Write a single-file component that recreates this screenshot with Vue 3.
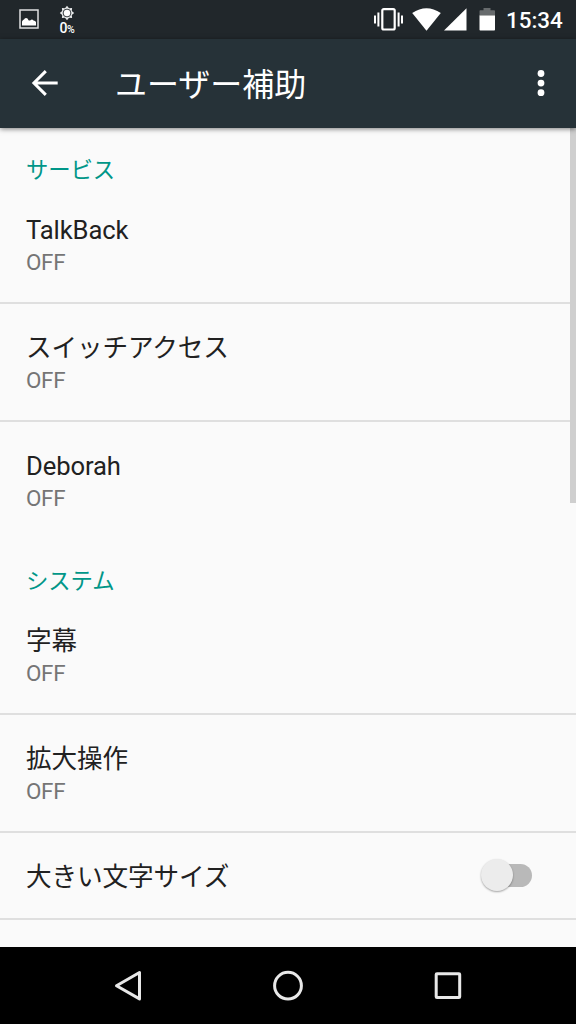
<script setup>
import { ref } from 'vue'

const sections = ref([
  {
    title: 'サービス',
    items: [
      { label: 'TalkBack', summary: 'OFF', latin: true },
      { label: 'スイッチアクセス', summary: 'OFF' },
      { label: 'Deborah', summary: 'OFF', latin: true },
    ],
  },
  {
    title: 'システム',
    items: [
      { label: '字幕', summary: 'OFF' },
      { label: '拡大操作', summary: 'OFF' },
      { label: '大きい文字サイズ', toggle: true },
    ],
  },
])
</script>

<template>
  <div class="screen">
    <header class="status">
      <svg class="picture" width="20" height="20" viewBox="0 0 20 20">
        <rect x="1" y="1" width="18" height="18" fill="none" stroke="#dfe1e2" stroke-width="1.5" />
        <path d="M3 16.500V12.500q1-1.800 2-2q.5-1.500 2-1.500q1.800 0 2.500 2.200q1 .8 2 0q1.500-1.500 3 .2q1.800 0 2.500 1.500v3.600z" fill="#fff" />
      </svg>
      <div class="brightness">
        <svg width="16" height="16" viewBox="0 0 16 16">
          <path d="M8 .8 10 3.200 13.100 2.900 12.800 6 15.200 8 12.800 10 13.100 13.100 10 12.800 8 15.200 6 12.800 2.900 13.100 3.200 10 .8 8 3.200 6 2.900 2.900 6 3.200z" fill="#e8eaeb" />
          <circle cx="8" cy="8" r="3.900" fill="#fff" stroke="#343a3e" stroke-width="1" />
        </svg>
        <span class="percent">0<small>%</small></span>
      </div>
      <svg class="indicators" width="124" height="26" viewBox="0 0 124 26">
        <g fill="#fff">
          <path d="M0 8.500h2v8H0zM3.400 5.500h2v14h-2zM23.600 5.500h2v14h-2zM27 8.500h2v8h-2z" />
          <rect x="8.300" y="2.100" width="12.400" height="20.400" rx="1.500" fill="none" stroke="#fff" stroke-width="2.200" />
          <path d="M38.200 6Q52.500-3.500 66.800 6L52.500 23.700z" />
          <path d="M92.500 1.200V23.500H70z" />
          <path d="M105.500 8.200h15.500V22.700q0 .8-.8 .8h-13.900q-.8 0-.8-.8z" />
        </g>
        <path d="M105.500 8.200V4q0-.8 .8-.8h3.200V1h7v2.200h3.700q.8 0 .8 .8v4.200z" fill="#676b6d" />
      </svg>
      <time>15:34</time>
    </header>

    <div class="toolbar">
      <svg class="back" width="28" height="28" viewBox="0 0 28 28">
        <path d="M26.700 14H3M14.800 2.100 2.900 14 14.800 25.900" fill="none" stroke="#fff" stroke-width="3" />
      </svg>
      <h1>ユーザー補助</h1>
      <svg class="more" width="8" height="28" viewBox="0 0 8 28" fill="#fff">
        <circle cx="4" cy="4.500" r="3.400" />
        <circle cx="4" cy="14.100" r="3.400" />
        <circle cx="4" cy="23.700" r="3.400" />
      </svg>
    </div>

    <main>
      <section v-for="section in sections" :key="section.title">
        <h2>{{ section.title }}</h2>
        <div v-for="item in section.items" :key="item.label" class="item" :class="{ single: item.toggle }">
          <div class="text">
            <div class="label" :class="{ latin: item.latin }">{{ item.label }}</div>
            <div v-if="item.summary" class="summary">{{ item.summary }}</div>
          </div>
          <div v-if="item.toggle" class="switch"><span class="thumb"></span></div>
        </div>
      </section>
      <div class="scrollbar"></div>
    </main>

    <nav>
      <svg width="160" height="77" viewBox="0 0 160 77">
        <path d="M91.500 25.500v26.400L68.500 38.700z" fill="none" stroke="#e8e8e8" stroke-width="3" stroke-linejoin="round" />
      </svg>
      <svg width="160" height="77" viewBox="0 0 160 77">
        <circle cx="80" cy="38.700" r="13.400" fill="none" stroke="#e8e8e8" stroke-width="3" />
      </svg>
      <svg width="160" height="77" viewBox="0 0 160 77">
        <rect x="68.200" y="26.800" width="23.500" height="23.700" rx=".8" fill="none" stroke="#e8e8e8" stroke-width="3" />
      </svg>
    </nav>
  </div>
</template>

<style>
body {
  background: #fafafa;
}
</style>

<style scoped>
.screen {
  width: 576px;
  height: 1024px;
  display: flex;
  flex-direction: column;
  overflow: hidden;
  background: #fafafa;
  color: #212121;
  font-family: Roboto, "Noto Sans CJK JP", sans-serif;
}
.status {
  height: 39px;
  flex: none;
  display: flex;
  align-items: flex-start;
  background: #21272b;
  color: #fff;
}
.picture {
  margin: 9px 0 0 19px;
}
.brightness {
  width: 24px;
  margin: 5px 0 0 16px;
  display: flex;
  flex-direction: column;
  align-items: center;
}
.percent {
  font-size: 14px;
  font-weight: 500;
  line-height: 14px;
  letter-spacing: -0.3px;
  white-space: nowrap;
}
.percent small {
  font-size: 10.5px;
}
.indicators {
  margin: 7px 0 0 295px;
}
time {
  margin-left: 8px;
  font-size: 22.4px;
  font-weight: 500;
  line-height: 40px;
}
.toolbar {
  position: relative;
  z-index: 1;
  height: 89px;
  flex: none;
  display: flex;
  align-items: center;
  background: #263238;
  box-shadow: 0 1px 5px rgba(0, 0, 0, 0.5);
}
.back {
  margin: 0 0 1px 31px;
}
h1 {
  flex: 1;
  margin: 2px 0 0 56px;
  color: #fff;
  font-size: 32px;
  font-weight: 400;
  line-height: 40px;
}
.more {
  margin: 0 31px 1px 0;
}
main {
  position: relative;
  flex: 1;
  min-height: 0;
  overflow: hidden;
}
h2 {
  box-sizing: border-box;
  height: 58px;
  margin: 0;
  padding: 27px 26px 0;
  color: #009688;
  font-size: 22.4px;
  font-weight: 400;
  line-height: 30px;
  letter-spacing: -0.1px;
}
section + section h2 {
  height: 57px;
  padding-top: 26px;
}
.item {
  box-sizing: border-box;
  height: 118px;
  padding: 28px 44px 0 26px;
  display: flex;
  justify-content: space-between;
  border-bottom: 2px solid #dfdfdf;
}
section:first-child .item:last-child {
  border-bottom-color: transparent;
}
.label {
  font-size: 25.6px;
  line-height: 32px;
  letter-spacing: -0.08px;
}
.latin {
  letter-spacing: -0.1px;
}
.summary {
  color: #757575;
  font-size: 22.4px;
  line-height: 32px;
  letter-spacing: -0.3px;
}
.single {
  height: 87px;
  padding-top: 0;
  align-items: center;
}
.single .label {
  padding-top: 3px;
}
.switch {
  position: relative;
  width: 46px;
  height: 22.5px;
  border-radius: 12px;
  background: #b9b9b9;
}
.thumb {
  position: absolute;
  left: -5px;
  top: -5px;
  width: 32px;
  height: 32px;
  border-radius: 50%;
  background: #ececec;
  box-shadow: 0 1px 2px rgba(0, 0, 0, 0.35);
}
.scrollbar {
  position: absolute;
  top: 0;
  right: 0;
  width: 6.400px;
  height: 375px;
  background: #cfcfcf;
}
nav {
  height: 77px;
  flex: none;
  display: flex;
  justify-content: center;
  background: #000;
}
</style>
